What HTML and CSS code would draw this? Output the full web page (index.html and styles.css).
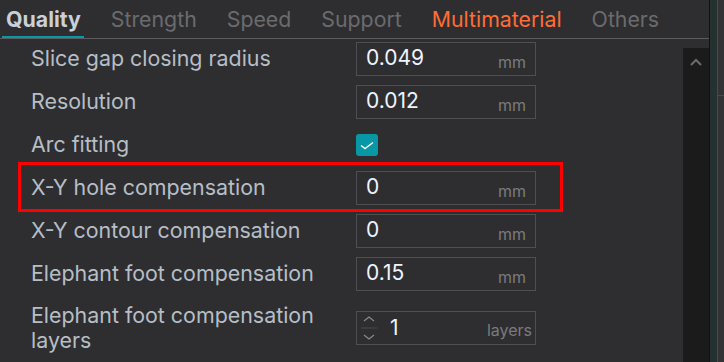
FILE: index.html
```html
<!DOCTYPE html>
<html>
<head>
  <meta charset="UTF-8" />
  <title>Process settings: Quality</title>
  <link rel="stylesheet" href="styles.css">
</head>
<body>
  <div class="app">
    <section class="panel">
      <nav class="tabs">
        <span class="tab active">Quality</span>
        <span class="tab">Strength</span>
        <span class="tab">Speed</span>
        <span class="tab">Support</span>
        <span class="tab changed">Multimaterial</span>
        <span class="tab">Others</span>
      </nav>
      <div class="content">
        <div class="list">
          <div class="row">
            <label class="name">Slice gap closing radius</label>
            <div class="field"><span class="value">0.049</span><span class="unit">mm</span></div>
          </div>
          <div class="row">
            <label class="name">Resolution</label>
            <div class="field"><span class="value">0.012</span><span class="unit">mm</span></div>
          </div>
          <div class="row">
            <label class="name">Arc fitting</label>
            <span class="check">
              <svg width="22" height="22" viewBox="0 0 22 22"><path d="M5 11.5 L9 14.5 L17 8.5" fill="none" stroke="#fff" stroke-width="1.4"/></svg>
            </span>
          </div>
          <div class="row highlight">
            <label class="name">X-Y hole compensation</label>
            <div class="field"><span class="value">0</span><span class="unit">mm</span></div>
          </div>
          <div class="row">
            <label class="name">X-Y contour compensation</label>
            <div class="field"><span class="value">0</span><span class="unit">mm</span></div>
          </div>
          <div class="row">
            <label class="name">Elephant foot compensation</label>
            <div class="field"><span class="value">0.15</span><span class="unit">mm</span></div>
          </div>
          <div class="row tall">
            <label class="name">Elephant foot compensation<br>layers</label>
            <div class="field spin">
              <span class="arrows">
                <svg width="18" height="32" viewBox="0 0 18 32"><path d="M4 9 L9 5 L14 9" fill="none" stroke="#8a8a8c" stroke-width="1.2"/><path d="M1 16 H17" stroke="#4a4a4d" stroke-width="1"/><path d="M4 23 L9 27 L14 23" fill="none" stroke="#8a8a8c" stroke-width="1.2"/></svg>
              </span>
              <span class="value">1</span><span class="unit">layers</span>
            </div>
          </div>
        </div>
        <div class="scrollbar">
          <svg width="12" height="8" viewBox="0 0 12 8"><path d="M1 7 L6 2 L11 7" fill="none" stroke="#6c6c6e" stroke-width="2"/></svg>
        </div>
      </div>
    </section>
    <div class="edge">
      <div class="edge-dark"></div>
      <div class="edge-teal"></div>
      <div class="edge-grey"></div>
    </div>
  </div>
</body>
</html>
```

FILE: styles.css
```css
body {
  margin: 0;
  background: #2e2e31;
  font-family: Inter, "Noto Sans", sans-serif;
  overflow: hidden;
}

.app {
  display: flex;
  height: 362px;
}
.panel {
  flex-grow: 1;
  display: flex;
  flex-direction: column;
  min-width: 0;
}

/* tab strip */
.tabs {
  display: flex;
  gap: 30px;
  height: 38px;
  padding-left: 6px;
  border-bottom: 1px solid #5b5b5f;
  flex-shrink: 0;
  white-space: nowrap;
}
.tab {
  font-size: 21.3px;
  line-height: 38px;
  color: #6b6b6d;
  border-bottom: 2px solid transparent;
  height: 36px;
}
.tab.active {
  color: #c9d0d8;
  font-weight: bold;
  border-bottom-color: #0b98a4;
  margin: 0 -3px 0 -4px;
  padding: 0 3px 0 4px;
}
.tab.changed {
  color: #ff6c35;
}

/* option list */
.content {
  flex-grow: 1;
  display: flex;
  overflow: hidden;
}
.list {
  flex-grow: 1;
  margin-top: -2px;
}
.row {
  display: flex;
  align-items: center;
  height: 43px;
}
.row.tall {
  height: 66px;
}
.name {
  width: 325px;
  padding-left: 31px;
  flex-shrink: 0;
  font-size: 21.4px;
  line-height: 25px;
  color: #b6bec6;
}
.field {
  box-sizing: border-box;
  width: 180px;
  height: 34px;
  border: 1px solid #4f4f53;
  display: flex;
  align-items: center;
  padding: 0 9px 0 9px;
}
.value {
  flex-grow: 1;
  font-size: 21px;
  color: #eef3ff;
  margin-top: -3px;
}
.unit {
  font-size: 16px;
  color: #7b7b7e;
  margin-top: 7px;
}
.spin {
  padding-left: 3px;
  padding-right: 3px;
}
.spin .arrows {
  display: flex;
  margin-right: 12px;
}
.spin .value {
  margin-top: -2px;
}
.spin .unit {
  margin-top: 3px;
}

.check {
  display: flex;
  width: 22px;
  height: 22px;
  border-radius: 3px;
  background: #0897a4;
}

.row.highlight {
  position: relative;
}
.row.highlight::after {
  content: "";
  position: absolute;
  left: 18px;
  top: -4px;
  width: 545px;
  height: 50px;
  box-sizing: border-box;
  border: 3px solid #ff0000;
}

.scrollbar {
  width: 26px;
  margin-top: 9px;
  background: #1b1b1b;
  display: flex;
  justify-content: center;
  padding-top: 10px;
  align-items: flex-start;
}

/* neighbouring panel edge */
.edge {
  display: flex;
  flex-shrink: 0;
}
.edge-dark {
  width: 1px;
  background: #111112;
}
.edge-teal {
  width: 7px;
  background: #253031;
}
.edge-grey {
  width: 7px;
  background: #333336;
  border-left: 1px solid #4a4a4e;
  box-sizing: border-box;
  background-image: linear-gradient(#4a4a4e, #4a4a4e);
  background-size: 100% 1px;
  background-position: 0 95px;
  background-repeat: no-repeat;
}
```
